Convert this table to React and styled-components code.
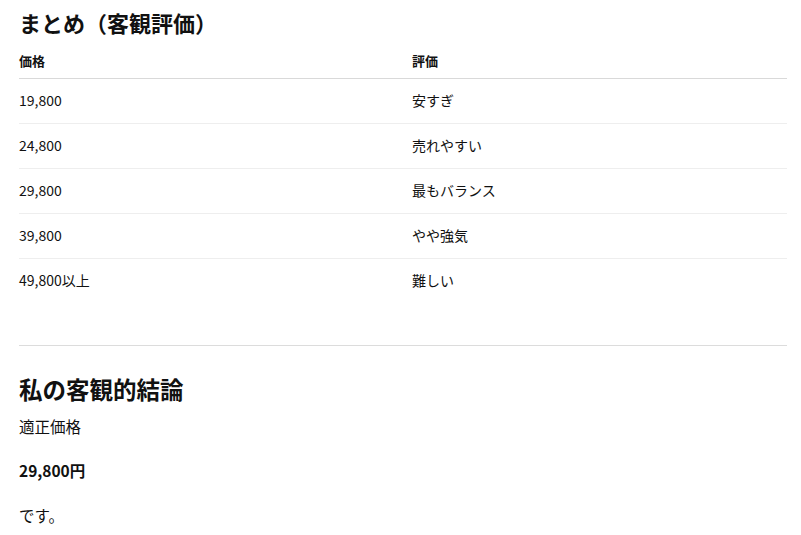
import React from "react";
import styled, { createGlobalStyle } from "styled-components";

const Global = createGlobalStyle`
  html, body { margin: 0; padding: 0; background: #fff; }
  body {
    font-family: "Noto Sans CJK JP", "Noto Sans", sans-serif;
    color: #111;
  }
`;

const Page = styled.div`
  padding: 0 14px 0 19px;
`;

const Heading = styled.h2`
  margin: ${(p) => p.$top}px 0 ${(p) => p.$bottom}px;
  font-size: ${(p) => p.$size}px;
  line-height: 32px;
  font-weight: 700;
  color: #111;
`;

const Table = styled.div`
  display: grid;
  grid-template-columns: 393px 1fr;
`;

const HeadCell = styled.div`
  font-size: 13px;
  font-weight: 700;
  line-height: 20px;
  padding: 7px 0;
  border-bottom: 1px solid #d9d9d9;
`;

const Cell = styled.div`
  font-size: 14px;
  line-height: 22px;
  padding: 10px 0 12px;
  border-bottom: 1px solid ${(p) => (p.$last ? "transparent" : "#eeeeee")};
`;

const Rule = styled.hr`
  border: none;
  border-top: 1px solid #dcdcdc;
  margin: 41px 0 0;
`;

const Para = styled.p`
  margin: 0 0 ${(p) => p.$gap}px;
  font-size: 15.5px;
  line-height: 24px;
  font-weight: ${(p) => (p.$bold ? 700 : 400)};
`;

const rows = [
  ["19,800", "安すぎ"],
  ["24,800", "売れやすい"],
  ["29,800", "最もバランス"],
  ["39,800", "やや強気"],
  ["49,800以上", "難しい"],
];

export default function App() {
  return (
    <Page>
      <Global />
      <Heading $size={22} $top={6} $bottom={6}>まとめ（客観評価）</Heading>
      <Table>
        <HeadCell>価格</HeadCell>
        <HeadCell>評価</HeadCell>
        {rows.map(([a, b], i) => (
          <React.Fragment key={a}>
            <Cell $last={i === rows.length - 1}>{a}</Cell>
            <Cell $last={i === rows.length - 1}>{b}</Cell>
          </React.Fragment>
        ))}
      </Table>
      <Rule />
      <Heading $size={23.5} $top={27} $bottom={9}>私の客観的結論</Heading>
      <Para $gap={20}>適正価格</Para>
      <Para $gap={21} $bold>29,800円</Para>
      <Para $gap={0}>です。</Para>
    </Page>
  );
}
